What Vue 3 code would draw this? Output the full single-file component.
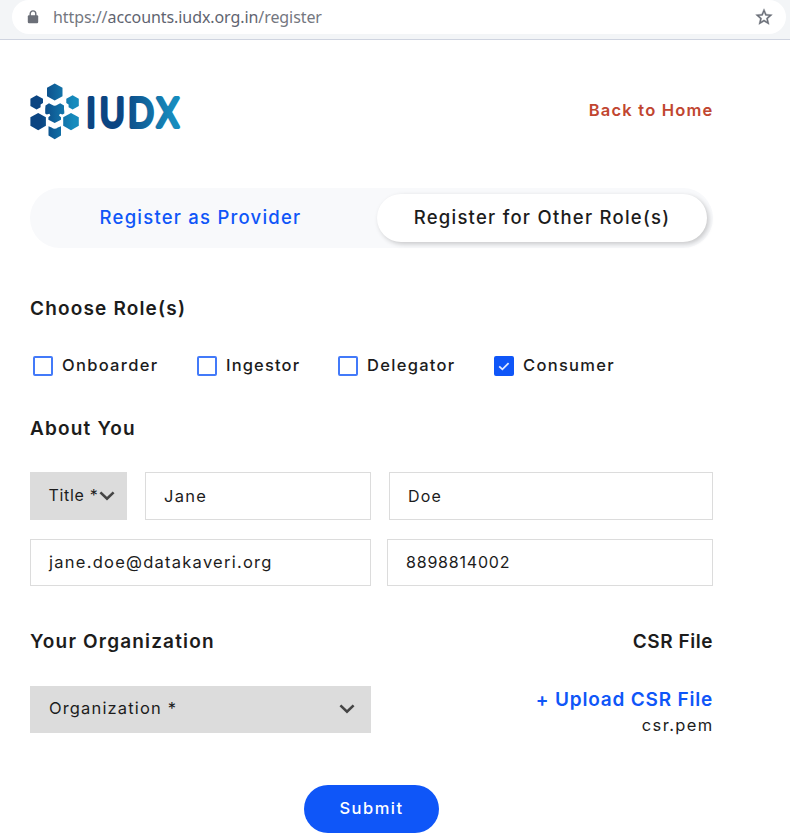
<script setup>
import { ref } from 'vue'

const roles = ref([
  { name: 'Onboarder', key: 'onboarder', checked: false },
  { name: 'Ingestor', key: 'ingestor', checked: false },
  { name: 'Delegator', key: 'delegator', checked: false },
  { name: 'Consumer', key: 'consumer', checked: true },
])
</script>

<template>
  <div class="page">
    <div class="browser">
      <div class="omnibox">
        <svg class="lock" width="12" height="14" viewBox="0 0 12 14">
          <path d="M3.2 6V3.7a2.8 2.8 0 0 1 5.6 0V6" fill="none" stroke="#6b6f78" stroke-width="1.4" />
          <rect x="0.8" y="5.2" width="10.4" height="8" rx="1.2" fill="#6b6f78" />
        </svg>
        <span class="url"><span class="dim">https://</span><span class="host">accounts.iudx.org.in</span><span class="dim path">/register</span></span>
        <svg class="star" width="20" height="20" viewBox="0 0 24 24">
          <path fill="#6b6f78" stroke="#6b6f78" stroke-width="0.4" d="M22 9.24l-7.19-.62L12 2 9.19 8.63 2 9.24l5.46 4.73L5.82 21 12 17.27 18.18 21l-1.63-7.03L22 9.24zM12 15.4l-3.76 2.27 1-4.28-3.32-2.88 4.38-.38L12 6.1l1.71 4.04 4.38.38-3.32 2.88 1 4.28L12 15.4z" />
        </svg>
      </div>
    </div>

    <main class="content">
      <header class="header">
        <svg class="logo" width="154" height="58" viewBox="0 0 154 58">
          <defs>
            <linearGradient id="mark" gradientUnits="userSpaceOnUse" x1="0" y1="0" x2="50" y2="0">
              <stop offset="0.22" stop-color="#0b4582" />
              <stop offset="0.88" stop-color="#168bbd" />
            </linearGradient>
            <linearGradient id="word" gradientUnits="userSpaceOnUse" x1="68" y1="0" x2="179" y2="0">
              <stop offset="0.35" stop-color="#0b4582" />
              <stop offset="0.9" stop-color="#168bbd" />
            </linearGradient>
          </defs>
          <g fill="url(#mark)">
            <path d="M24.7 0.5 32.5 4.8V13.2L24.7 17.5 17 13.2V4.8Z" />
            <path d="M6.6 12.2 13 15.7V20L10.6 21.4V24.2L6.6 26.5 0.4 23V15.7Z" />
            <path d="M42.6 12.2 48.8 15.7V23L42.6 26.5 38.6 24.2V21.4L36.3 20V15.7Z" />
            <path d="M8.2 30 15.9 34.3V42.7L8.2 47.2 0.4 42.7V34.3Z" />
            <path d="M41 30 48.8 34.3V42.7L41 47.2 33.2 42.7V34.3Z" />
            <path d="M19 20.2 22 21.7Q24.7 23.8 27.4 21.7L30.2 20.2 34 22.5V26L34.3 28.6V30.4L32.6 31.6 30 30.8 29 32.6 31 34.3V36.8L24.7 40 18.4 36.8V34.3L20.4 32.6 19.4 30.8 16.8 31.6 15.2 30.4V28.6V26L15.5 22.5Z" />
            <path d="M18.5 43.3 21.6 44.5Q24.7 47 27.8 44.5L31 43.3V52.5L24.7 56.2 18.5 52.5Z" />
          </g>
          <text transform="scale(0.85 1)" x="66.1 82.2 115.2 149.1" y="44.5" class="wordmark" fill="url(#word)" stroke="url(#word)">IUDX</text>
        </svg>
        <a class="home">Back to Home</a>
      </header>

      <nav class="tabs">
        <a class="tab provider">Register as Provider</a>
        <a class="tab active">Register for Other Role(s)</a>
      </nav>

      <h2 class="title roles-title">Choose Role(s)</h2>
      <div class="roles">
        <label v-for="role in roles" :key="role.key" class="role" :class="role.key">
          <span class="box" :class="{ checked: role.checked }">
            <svg v-if="role.checked" width="14" height="14" viewBox="0 0 14 14">
              <path d="M2.2 7.3 5.4 10.3 11.6 4.2" fill="none" stroke="#e3ebff" stroke-width="1.8" />
            </svg>
          </span>
          <span class="role-name">{{ role.name }}</span>
        </label>
      </div>

      <h2 class="title about-title">About You</h2>
      <div class="row names">
        <div class="select small">
          <span class="select-label">Title *</span>
          <svg width="16" height="10" viewBox="0 0 16 10"><path d="M1.4 1.4 8 7.8 14.6 1.4" fill="none" stroke="#454545" stroke-width="2.6" /></svg>
        </div>
        <div class="field first">Jane</div>
        <div class="field last">Doe</div>
      </div>
      <div class="row contact">
        <div class="field email">jane.doe@datakaveri.org</div>
        <div class="field phone">8898814002</div>
      </div>

      <div class="org-heads">
        <h2 class="title org-title">Your Organization</h2>
        <h2 class="title csr-title">CSR File</h2>
      </div>
      <div class="org-row">
        <div class="select wide">
          <span class="select-label org-label">Organization *</span>
          <svg width="16" height="10" viewBox="0 0 16 10"><path d="M1.4 1.4 8 7.8 14.6 1.4" fill="none" stroke="#454545" stroke-width="2.6" /></svg>
        </div>
        <div class="upload">
          <a class="upload-link">+ Upload CSR File</a>
          <span class="file">csr.pem</span>
        </div>
      </div>

      <button class="submit">Submit</button>
    </main>
  </div>
</template>

<style>
body {
  margin: 0;
  background: #fff;
}
</style>

<style scoped>
.page {
  width: 790px;
  height: 840px;
  overflow: hidden;
  background: #fff;
  color: #1c1c1c;
  font-family: Inter, "Open Sans", sans-serif;
  font-size: 16px;
  white-space: nowrap;
}
.page * {
  box-sizing: border-box;
}
.browser {
  height: 40px;
  padding: 0 4px 0 12px;
  background: #f3f5f7;
  border-bottom: 1px solid #cfd4e0;
}
.omnibox {
  display: flex;
  align-items: center;
  height: 34px;
  padding: 0 12px 0 15px;
  background: #fff;
  border-radius: 17px;
}
.url {
  flex: 1;
  margin-left: 14px;
  font-family: "Noto Sans", sans-serif;
  font-size: 16px;
  letter-spacing: -0.08px;
  color: #5f6470;
}
.dim {
  color: #74777f;
}
.content {
  display: flex;
  flex-direction: column;
  width: 683px;
  margin-left: 30px;
}
.header {
  display: flex;
  justify-content: space-between;
  height: 148px;
  padding-top: 43px;
}
.logo {
  overflow: visible;
}
.wordmark {
  font-family: Lato, sans-serif;
  font-weight: 400;
  font-size: 40px;
  stroke-width: 3.8;
  stroke-linejoin: round;
}
.home {
  height: 54px;
  line-height: 54px;
  color: #c14630;
  font-size: 16.5px;
  font-weight: 600;
  letter-spacing: 1.2px;
  margin-right: -0.5px;
}
.tabs {
  display: flex;
  align-items: center;
  height: 60px;
  padding: 0 6px;
  background: #f8f9fb;
  border-radius: 30px;
  font-size: 18.5px;
  font-weight: 500;
}
.tab {
  flex: 1;
  height: 48px;
  line-height: 47px;
  text-align: center;
}
.provider {
  flex: 0 0 341px;
  padding-right: 12px;
  color: #0f56f8;
  letter-spacing: 1.22px;
}
.active {
  background: #fff;
  border-radius: 24px;
  box-shadow: 2px 2px 5px rgba(0, 0, 0, 0.2);
  letter-spacing: 1.25px;
}
.title {
  margin: 0;
  height: 30px;
  line-height: 32px;
  font-size: 19px;
  font-weight: 600;
  letter-spacing: 1.17px;
}
.csr-title {
  letter-spacing: 0.55px;
}
.roles-title {
  margin-top: 45px;
}
.roles {
  display: grid;
  grid-template-columns: 164px 141px 156px auto;
  height: 20px;
  margin: 33px 0 0 3px;
}
.role {
  display: flex;
  align-items: center;
  gap: 9px;
  height: 20px;
  line-height: 20px;
  font-size: 16.5px;
  font-weight: 500;
  letter-spacing: 1.3px;
}
.ingestor {
  letter-spacing: 1.15px;
}
.role-name {
  margin-top: -2px;
}
.box {
  display: grid;
  place-items: center;
  width: 20px;
  height: 20px;
  border: 2px solid #437af9;
  border-radius: 2px;
}
.checked {
  background: #0f56f8;
  border-color: #0f56f8;
}
.about-title {
  margin-top: 37px;
}
.row {
  display: grid;
  letter-spacing: 0.8px;
}
.names {
  grid-template-columns: 97px 226px 324px;
  column-gap: 18px;
  height: 48px;
  margin-top: 29px;
}
.contact {
  grid-template-columns: 341px 326px;
  column-gap: 16px;
  height: 47px;
  margin-top: 19px;
}
.field {
  display: flex;
  align-items: center;
  padding-left: 18px;
  border: 1px solid #dcdcdc;
}
.first {
  font-size: 16.5px;
  letter-spacing: 1.3px;
}
.last {
  letter-spacing: 1.2px;
}
.email {
  font-size: 16.5px;
  letter-spacing: 1.25px;
}
.email,
.phone {
  padding-bottom: 1px;
}
.select {
  display: flex;
  align-items: center;
  justify-content: space-between;
  padding: 0 12px 0 19px;
  background: #dcdcdc;
  letter-spacing: 0.8px;
}
.small {
  padding-left: 18.5px;
  letter-spacing: 0.7px;
}
.select-label {
  padding-bottom: 2px;
}
.org-label {
  padding-bottom: 2px;
  font-size: 16.5px;
  letter-spacing: 1.15px;
}
.org-heads {
  display: flex;
  justify-content: space-between;
  margin-top: 40px;
}
.org-row {
  display: flex;
  justify-content: space-between;
  height: 47px;
  margin-top: 30px;
}
.wide {
  width: 341px;
  padding-right: 16px;
  padding-bottom: 1px;
}
.upload {
  display: flex;
  flex-direction: column;
  align-items: flex-end;
}
.upload-link {
  height: 26px;
  line-height: 27px;
  color: #0f56f8;
  font-size: 19px;
  font-weight: 600;
  letter-spacing: 0.8px;
}
.file {
  height: 26px;
  line-height: 27px;
  font-size: 16.5px;
  letter-spacing: 1.35px;
  margin-right: -0.5px;
}
.submit {
  align-self: center;
  width: 135px;
  height: 48px;
  margin-top: 52px;
  padding: 0 0 2px;
  border: 0;
  border-radius: 24px;
  background: #0f56f8;
  color: #fff;
  font: 500 16.5px/46px Inter, sans-serif;
  letter-spacing: 1.5px;
}
</style>
